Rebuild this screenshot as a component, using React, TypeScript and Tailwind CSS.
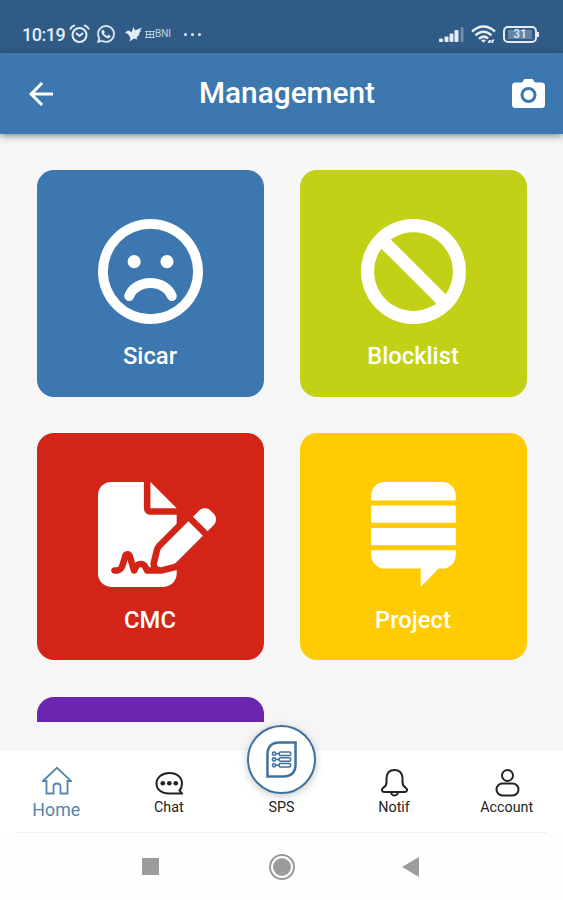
import type { ReactNode } from "react";
import { FaBan, FaFileSignature, FaRegFaceFrown, FaStackExchange } from "react-icons/fa6";
import { FaWhatsapp } from "react-icons/fa";
import { MdArrowBack } from "react-icons/md";

const menus = [
  { label: "Sicar", color: "bg-[#3c77b0]", icon: <FaRegFaceFrown size={105} /> },
  { label: "Blocklist", color: "bg-[#c2d116]", icon: <FaBan size={105} /> },
  {
    label: "CMC",
    color: "bg-[#d22417]",
    icon: <FaFileSignature className="h-[105px] w-[118px] shrink-0" />,
  },
  { label: "Project", color: "bg-[#ffcc03]", icon: <FaStackExchange size={105} /> },
];

const StatusBar = () => (
  <div className="flex h-[53px] items-center justify-between bg-[#305b86] pl-[22px] pr-[24px] pt-[15px] text-[#e4edf5]">
    <div className="flex items-center">
      <span className="w-[43px] whitespace-nowrap text-[18px] font-medium tracking-[-0.5px]">10:19</span>
      <svg className="ml-[4px]" width="21" height="20" viewBox="0 0 21 20" fill="none" stroke="currentColor">
        <circle cx="10.5" cy="11" r="7" strokeWidth="2" />
        <path d="M1 5.5Q2.5 2 6 1.3M20 5.5Q18.5 2 15 1.3" strokeWidth="1.8" />
        <path d="M7 9l3.5 3 3.5-3" strokeWidth="2" />
      </svg>
      <FaWhatsapp className="ml-[6px]" size={20} stroke="currentColor" strokeWidth={10} />
      <svg className="ml-[9px]" width="18" height="16" viewBox="0 0 18 16" fill="currentColor">
        <path d="M0 6.5L3 4.5Q5 4.5 6.5 6.5L8.5 1 10 4.5 17 1.5 15 4.5 16 5 14 7.5 14.5 8.5 11.5 11.5 12.5 13.5 9 12.5 4.5 15.5 5.5 12 3 8z" />
      </svg>
      <svg className="ml-[2px]" width="10" height="9" viewBox="0 0 10 9" fill="none" stroke="currentColor">
        <path d="M0 1.5h10M1.5 1v7M8.5 1v7M1 4.5h8M0 7.5h10M5 1v7" strokeWidth="0.9" opacity="0.8" />
      </svg>
      <span className="w-[19px] text-[10px] leading-none opacity-80">BNI</span>
      <div className="ml-[10px] flex gap-[4px]">
        <span className="size-[3px] rounded-full bg-current" />
        <span className="size-[3px] rounded-full bg-current" />
        <span className="size-[3px] rounded-full bg-current" />
      </div>
    </div>
    <div className="flex items-center">
      <svg width="26" height="17" viewBox="0 0 26 17" fill="currentColor">
        <rect x="0" y="12.5" width="4" height="3.5" rx="1" />
        <rect x="5.5" y="10.5" width="4" height="5.5" rx="1" />
        <rect x="10.5" y="7.5" width="4" height="8.5" rx="1" />
        <rect x="15.5" y="4" width="4" height="12" rx="1" />
        <rect x="21.5" y="1" width="3" height="15" rx="1" opacity="0.35" />
      </svg>
      <svg className="ml-[6px]" width="25" height="19" viewBox="0 0 25 19" fill="none" stroke="currentColor">
        <path d="M1 6.5Q12.5-3.5 24 6.5M4.5 10.3Q12.5 3.3 20.5 10.3M8 13.8Q12.5 9.5 17 13.5" strokeWidth="2.5" />
        <path d="M10 15.3q2.5-1.8 5 0l-2.5 2.5z" fill="currentColor" stroke="none" />
        <path d="M16.5 18l1.5-3h2.5l-1.3 3zM20 18l1.3-3.5h2L22 18z" fill="currentColor" stroke="none" />
      </svg>
      <div className="ml-[7px] flex h-[17px] w-[34px] items-center justify-center rounded-[5px] border-2 border-current">
        <span className="flex h-[9px] w-[24px] items-center justify-center bg-[#6484a3] text-[12px] font-medium leading-none">
          31
        </span>
      </div>
      <span className="h-[5px] w-[2px] bg-current" />
    </div>
  </div>
);

const Header = () => (
  <header className="relative z-10 flex h-[81px] items-center justify-between bg-[#3c77b0] pl-[23px] pr-[17px] text-white shadow-[0_2px_7px_rgba(0,0,0,0.45)]">
    <MdArrowBack size={36} />
    <h1 className="pb-[2px] pl-[4px] text-[29.8px] font-medium leading-none">Management</h1>
    <svg width="35" height="32" viewBox="0 0 35 32" fill="none">
      <path
        d="M4.500 4.500h6.500L13.500 1h8L24 4.500h6.500q3.500 0 3.500 3.500v18.500q0 3.500-3.500 3.500h-26q-3.500 0-3.500-3.500V8q0-3.500 3.500-3.500z"
        fill="currentColor"
      />
      <circle cx="17.5" cy="17" r="6.5" stroke="#3c77b0" strokeWidth="3" />
    </svg>
  </header>
);

const NavItem = ({ label, children }: { label: string; children: ReactNode }) => (
  <button className="flex w-[112.6px] flex-col items-center pt-[17px] text-[#222]">
    {children}
    <span className="mt-[2px] text-[14.3px] leading-[17px]">{label}</span>
  </button>
);

const BottomNav = () => (
  <nav className="relative flex h-[81px] bg-white">
    <button className="flex w-[112.6px] flex-col items-center pt-[15px] text-[#5485ad]">
      <svg className="ml-[2px]" width="30" height="29" viewBox="0 0 30 29" fill="none" stroke="currentColor" strokeWidth="1.8">
        <path d="M1 15L15 1.8 29 15H25.5V27.5H18.5V20.5Q18.5 17.5 15 17.5T11.5 20.5V27.5H4.5V15z" />
      </svg>
      <span className="mt-[4px] text-[17.8px] leading-[21px]">Home</span>
    </button>
    <NavItem label="Chat">
      <svg className="ml-[1px]" width="28" height="29" viewBox="0 0 28 29" fill="none" stroke="currentColor" strokeWidth="2">
        <path d="M27 25.5H14C6.5 25.5 1.5 21.5 1.5 15.5S7 5 14.5 5 27 9.5 27 15.5Q27 19.5 24.5 22.5L27 25.5z" />
        <g fill="currentColor" stroke="none">
          <circle cx="7.8" cy="15.3" r="2.3" />
          <circle cx="14.3" cy="15.3" r="2.3" />
          <circle cx="20.8" cy="15.3" r="2.3" />
        </g>
      </svg>
    </NavItem>
    <div className="flex w-[112.6px] flex-col items-center justify-end pb-[16px] text-[#222]">
      <button className="absolute left-[247px] top-[-26px] flex size-[69px] items-center justify-center rounded-full border-[2.5px] border-[#3f719d] bg-white shadow-[0_2px_8px_rgba(0,0,0,0.22)]">
        <svg width="31" height="37" viewBox="0 0 32 38" fill="none" stroke="#3f719d">
          <path d="M30.5 1.5H14Q1.5 1.5 1.5 14V36.5H18Q30.5 36.5 30.5 24z" strokeWidth="2.6" />
          <g strokeWidth="1.6">
            <path d="M10 13h3.5M10 19h3.5M10 25h3.5" />
            <circle cx="8.3" cy="13" r="1.7" />
            <circle cx="8.3" cy="19" r="1.7" />
            <circle cx="8.3" cy="25" r="1.7" />
            <rect x="13.5" y="11.2" width="12" height="3.6" rx="1.5" />
            <rect x="13.5" y="17.2" width="12" height="3.6" rx="1.5" />
            <rect x="13.5" y="23.2" width="12" height="3.6" rx="1.5" />
          </g>
        </svg>
      </button>
      <span className="text-[14.3px] leading-[17px]">SPS</span>
    </div>
    <NavItem label="Notif">
      <svg width="27" height="29" viewBox="0 0 27 29" fill="none" stroke="currentColor" strokeWidth="2">
        <path d="M5.5 12V10Q6 2 13.5 2T21.5 10V14Q21.5 18 24.5 19.5Q26.5 21 26 22.5Q25.5 24 23.5 24H3.5Q1.5 24 1 22.5Q0.5 21 2.5 19.5Q5.5 18 5.5 14z" />
        <path d="M10 25Q11 27.5 13.5 27.5T17 25" />
      </svg>
    </NavItem>
    <NavItem label="Account">
      <svg className="ml-[2px]" width="25" height="29" viewBox="0 0 25 29" fill="none" stroke="currentColor" strokeWidth="2">
        <circle cx="12.5" cy="7.5" r="5.5" />
        <rect x="1.5" y="15.5" width="22" height="12" rx="6" />
      </svg>
    </NavItem>
  </nav>
);

const App = () => {
  return (
    <div className="flex h-[900px] w-[563px] flex-col overflow-hidden bg-[#f6f6f6] font-['Roboto',sans-serif]">
      <StatusBar />
      <Header />
      <main className="h-[588px] overflow-hidden px-[36.5px] pt-[36px]">
        <div className="grid grid-cols-2 gap-x-[36px] gap-y-[36.3px]">
          {menus.map((menu) => (
            <button
              key={menu.label}
              className={`flex h-[227px] flex-col items-center rounded-[17px] pt-[49px] text-white ${menu.color}`}
            >
              <div className="flex size-[105px]">{menu.icon}</div>
              <span className="mt-[18.3px] text-[23.8px] font-medium leading-[28px]">{menu.label}</span>
            </button>
          ))}
          <div className="h-[227px] rounded-[17px] bg-[#6b25b1]" />
        </div>
      </main>
      <div className="h-[29px]" />
      <BottomNav />
      <div className="flex h-[68px] flex-col bg-[#fefefe] px-[16px]">
        <div className="h-px bg-[#f0f0f0]" />
        <div className="flex flex-1 items-center pl-[126px]">
          <span className="size-[17px] bg-[#9c9c9c]" />
          <span className="ml-[110px] flex size-[26px] items-center justify-center rounded-full border-2 border-[#999]">
            <span className="size-[18px] rounded-full bg-[#9c9c9c]" />
          </span>
          <svg className="ml-[107px]" width="17" height="20" viewBox="0 0 17 20">
            <path d="M17 0v20L0 10z" fill="#9c9c9c" />
          </svg>
        </div>
      </div>
    </div>
  );
};

export default App;
